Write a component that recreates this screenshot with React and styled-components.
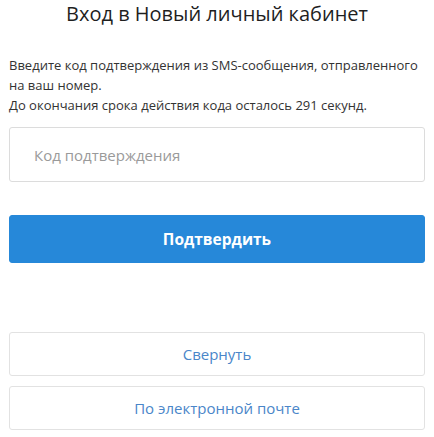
import React, { useState } from 'react';
import styled, { createGlobalStyle } from 'styled-components';

const GlobalStyle = createGlobalStyle`
  html, body {
    margin: 0;
    padding: 0;
    background: #fff;
  }
  body {
    font-family: 'Open Sans', 'Noto Sans', sans-serif;
  }
  * {
    box-sizing: border-box;
  }
`;

const Page = styled.div`
  width: 434px;
  padding: 0 9px;
  display: flex;
  flex-direction: column;
`;

const Title = styled.h1`
  margin: 0;
  font-size: 20px;
  line-height: 28px;
  font-weight: 400;
  color: #1f1f1f;
  text-align: center;
`;

const Hint = styled.p`
  margin: 27px 0 0;
  font-size: 13px;
  line-height: 20px;
  color: #333;
`;

const CodeInput = styled.input`
  margin-top: 12px;
  height: 55px;
  width: 100%;
  padding: 0 24px;
  border: 1px solid #dcdcdc;
  border-radius: 3px;
  font-family: inherit;
  font-size: 15px;
  color: #333;
  outline: none;

  &::placeholder {
    color: #9a9a9a;
  }
`;

const Button = styled.button`
  width: 100%;
  height: ${(p) => (p.$primary ? '48px' : '44px')};
  margin-top: ${(p) => p.$gap}px;
  border-radius: 3px;
  border: 1px solid ${(p) => (p.$primary ? '#2688d9' : '#e2e2e2')};
  background: ${(p) => (p.$primary ? '#2688d9' : '#fff')};
  color: ${(p) => (p.$primary ? '#fff' : '#4a86c9')};
  font-family: inherit;
  font-size: ${(p) => (p.$primary ? '15.5px' : '15px')};
  font-weight: ${(p) => (p.$primary ? 700 : 400)};
  cursor: pointer;
`;

const App = () => {
  const [code, setCode] = useState('');

  return (
    <>
      <GlobalStyle />
      <Page>
        <Title>Вход в Новый личный кабинет</Title>
        <Hint>
          Введите код подтверждения из SMS-сообщения, отправленного на ваш номер.
          <br />
          До окончания срока действия кода осталось 291 секунд.
        </Hint>
        <CodeInput
          type="text"
          placeholder="Код подтверждения"
          value={code}
          onChange={(e) => setCode(e.target.value)}
        />
        <Button $primary $gap={33}>Подтвердить</Button>
        <Button $gap={69}>Свернуть</Button>
        <Button $gap={10}>По электронной почте</Button>
      </Page>
    </>
  );
};

export default App;
